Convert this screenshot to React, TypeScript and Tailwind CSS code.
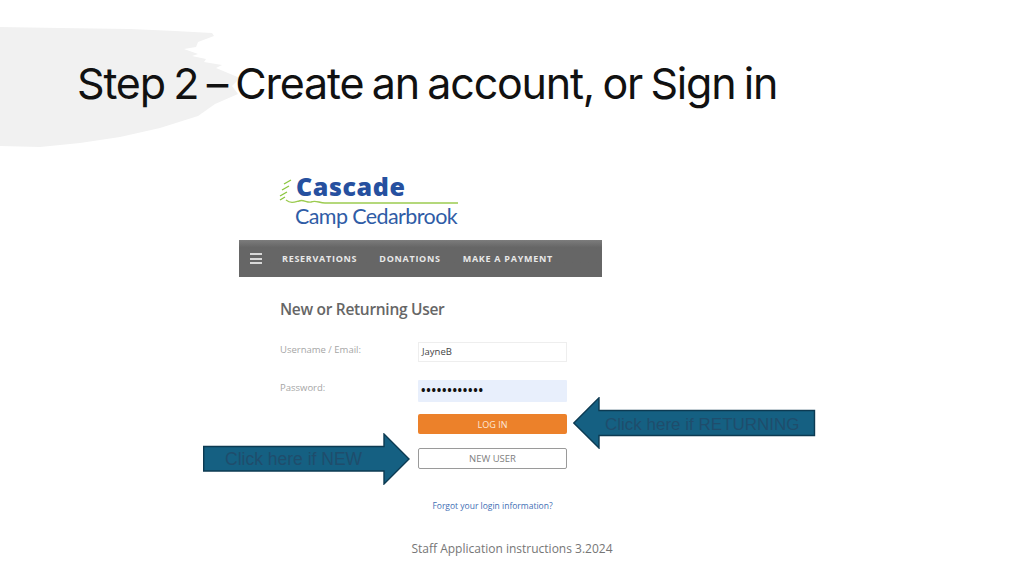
import React from 'react';

const Brush = () => (
    <svg className="absolute left-0 top-0" width="300" height="160" viewBox="0 0 300 160">
        <path
            d="M0 27 L60 28 L130 29 L175 31 L212 33 L214 36 L198 42 L196 47 L184 49 L198 54 L192 56 L206 59 L204 62 L222 65 L216 68 L240 78 L232 86 L238 94 L215 104 L198 116 L160 128 L120 137 L80 143 L40 147 L0 146 Z"
            fill="#f1f1f1"
        />
    </svg>
);

const Logo = () => (
    <div className="relative h-[75px] w-[363px]">
        <svg className="absolute left-0 top-0" width="363" height="75" viewBox="0 0 363 75">
            <path d="M52 15 L45 19 M50 21 L43 25 M48 27 L41 31 M46 32 L41 35" stroke="#8cc63f" strokeWidth="1.4" fill="none" />
            <path d="M47 35 C52 39 56 37 60 36 C64 34 68 38 72 37 C77 35 80 38 86 38 L219 38" stroke="#9ccb50" strokeWidth="1.4" fill="none" />
        </svg>
        <div className="absolute left-[57px] top-[7px] font-['Open_Sans',sans-serif] text-[25px] font-extrabold leading-[28px] tracking-[0.6px] text-[#26509f]">
            Cascade
        </div>
        <div className="absolute left-[56px] top-[38px] font-['Lato',sans-serif] text-[21.5px] leading-[26px] tracking-[-0.6px] text-[#2f5ca6]">
            Camp Cedarbrook
        </div>
    </div>
);

const NavBar = () => (
    <div className="flex h-[37px] items-center bg-gradient-to-b from-[#7c7c7c] from-[0%] via-[#666666] via-[20%] to-[#666666] pl-[11px] font-['Open_Sans',sans-serif] text-[9px] font-bold tracking-[0.72px] text-[#e8e8e8]">
        <div className="mr-[20px] flex flex-col gap-[2.5px]">
            <div className="h-[2px] w-[12px] bg-[#d8d8d8]" />
            <div className="h-[2px] w-[12px] bg-[#d8d8d8]" />
            <div className="h-[2px] w-[12px] bg-[#d8d8d8]" />
        </div>
        <span className="mr-[22px]">RESERVATIONS</span>
        <span className="mr-[22px]">DONATIONS</span>
        <span>MAKE A PAYMENT</span>
    </div>
);

const LoginForm = () => (
    <div className="relative flex flex-col pl-[41px] font-['Open_Sans',sans-serif]">
        <h2 className="mt-[20px] h-[24px] text-[15.5px] font-semibold leading-[24px] tracking-[-0.3px] text-[#666666]">New or Returning User</h2>
        <div className="mt-[21px] flex h-[20px] w-[327px]">
            <label className="w-[138px] text-[9.5px] leading-[15px] text-[#a6a6a6]">Username / Email:</label>
            <div className="flex w-[149px] items-center border border-[#eeeeee] pl-[3px] text-[9.5px] text-[#444444]">JayneB</div>
        </div>
        <div className="mt-[18px] flex h-[22px] w-[327px]">
            <label className="w-[138px] text-[9.5px] leading-[15px] text-[#a6a6a6]">Password:</label>
            <div className="flex w-[149px] items-center rounded-[1px] bg-[#e8effc] pl-[3px] text-[12px] font-bold tracking-[0.72px] text-[#111111]">••••••••••••</div>
        </div>
        <div className="ml-[138px] mt-[12px] flex h-[20px] w-[149px] items-center justify-center rounded-[2px] bg-[#ec812a] pt-[1px] text-[9px] text-[#fde8d8]">LOG IN</div>
        <div className="ml-[138px] mt-[14px] flex h-[21px] w-[149px] items-center justify-center rounded-[2px] border border-[#9a9a9a] pt-[1px] text-[9.5px] text-[#808080]">NEW USER</div>
        <a className="ml-[138px] mt-[30px] w-[149px] text-center text-[8.5px] leading-[13px] text-[#3f6fb5]">Forgot your login information?</a>
    </div>
);

const ArrowLeft = () => (
    <div className="absolute left-[573px] top-[397px] h-[52px] w-[243px]">
        <svg className="absolute inset-0" width="243" height="52" viewBox="0 0 243 52">
            <path d="M0.8 26 L26 0.8 L26 13.5 L241.5 13.5 L241.5 38.5 L26 38.5 L26 51 Z" fill="#156082" stroke="#0c3a52" strokeWidth="1.4" />
        </svg>
        <div className="absolute left-[32px] top-[18px] font-['Liberation_Sans',sans-serif] text-[17px] leading-[19px] text-[#1f4d6c]">Click here if RETURNING</div>
    </div>
);

const ArrowRight = () => (
    <div className="absolute left-[203px] top-[433px] h-[52px] w-[207px]">
        <svg className="absolute inset-0" width="207" height="52" viewBox="0 0 207 52">
            <path d="M0.7 13.5 L181 13.5 L181 1 L206 26 L181 51 L181 38 L0.7 38 Z" fill="#156082" stroke="#0c3a52" strokeWidth="1.4" />
        </svg>
        <div className="absolute left-[22px] top-[17px] font-['Liberation_Sans',sans-serif] text-[17.5px] leading-[19px] text-[#1f4d6c]">Click here if NEW</div>
    </div>
);

export default function App() {
    return (
        <div className="relative flex h-[576px] w-[1024px] flex-col overflow-hidden bg-white font-['Inter',sans-serif]">
            <Brush />
            <h1 className="relative ml-[77px] mt-[55px] h-[56px] text-[43px] font-normal leading-[56px] tracking-[-1.2px] text-[#111111] [word-spacing:-2.5px]">
                Step 2 – Create an account, or Sign in
            </h1>
            <div className="relative ml-[239px] mt-[54px] w-[363px]">
                <Logo />
                <NavBar />
                <LoginForm />
            </div>
            <ArrowLeft />
            <ArrowRight />
            <div className="mt-auto mb-[20px] text-center font-['Open_Sans',sans-serif] text-[12px] leading-[14px] text-[#767676]">
                Staff Application instructions 3.2024
            </div>
        </div>
    );
}
